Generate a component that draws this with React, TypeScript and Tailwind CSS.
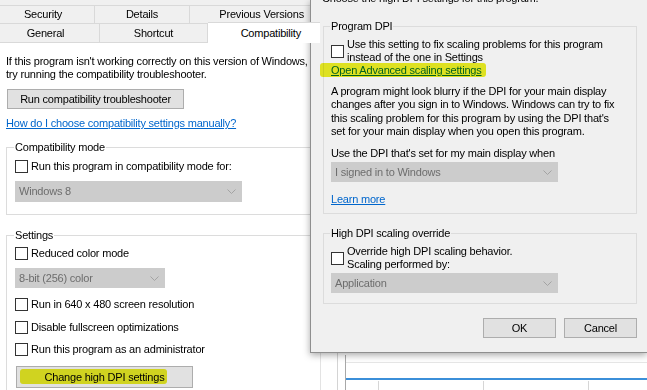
import React from 'react';

// tiny win32 style helpers
function Check() {
  return <span className="block w-[13px] h-[13px] shrink-0 border border-[#333333] bg-white" />;
}

function Chevron() {
  return (
    <svg width="9" height="5" viewBox="0 0 9 5" className="shrink-0">
      <polyline points="0.5,0.5 4.5,4.5 8.5,0.5" fill="none" stroke="#a3a3a3" strokeWidth="1" />
    </svg>
  );
}

function Select({ value, className }: { value: string; className: string }) {
  return (
    <div className={`flex items-center justify-between bg-[#cccccc] border border-[#cccccc] pl-[3px] pr-[5px] text-[#6d6d6d] ${className}`}>
      <span>{value}</span>
      <Chevron />
    </div>
  );
}

function Button({ children, className }: { children: React.ReactNode; className: string }) {
  return (
    <div className={`flex items-center justify-center bg-[#e1e1e1] border border-[#adadad] ${className}`}>
      {children}
    </div>
  );
}

function Marker({ children, className }: { children: React.ReactNode; className: string }) {
  return (
    <span className="relative inline-block">
      {children}
      <span className={`absolute bg-[#ecf024] mix-blend-multiply rounded-[3px] blur-[0.6px] ${className}`} />
    </span>
  );
}

function Row({ children, className = '' }: { children: React.ReactNode; className?: string }) {
  return (
    <div className={`flex items-center gap-[3px] ${className}`}>
      <Check />
      <div>{children}</div>
    </div>
  );
}

export default function App() {
  return (
    <div className="relative w-[647px] h-[390px] overflow-hidden bg-white text-black text-[11px] tracking-[-0.2px] leading-[13px] font-['Liberation_Sans',Arial,sans-serif]">
      {/* Properties window */}
      <div className="absolute left-0 top-0 w-[321px] h-[390px] bg-[#f0f0f0] border-r border-[#e3e3e3] flex flex-col overflow-hidden">
        <div className="h-[5px] shrink-0" />
        <div className="flex h-[19px] shrink-0">
          <div className="w-[95px] border-t border-r border-b border-[#d9d9d9] flex items-center justify-center pr-[8px]">Security</div>
          <div className="w-[95px] border-t border-r border-b border-[#d9d9d9] flex items-center justify-center">Details</div>
          <div className="flex-1 border-t border-b border-[#d9d9d9] flex items-center justify-end pr-[16px]">Previous Versions</div>
        </div>
        <div className="flex h-[19px] shrink-0">
          <div className="w-[100px] border-r border-b border-[#d9d9d9] flex items-center justify-center pr-[8px]">General</div>
          <div className="w-[108px] border-r border-b border-[#d9d9d9] flex items-center justify-center">Shortcut</div>
          <div className="relative z-10 flex-1 h-[21px] -mt-[2px] bg-white border-t border-[#d9d9d9] flex items-center justify-end pr-[19px]">Compatibility</div>
        </div>

        <div className="flex-1 bg-white pl-[6px] pt-[12px] flex flex-col items-start">
          <div>If this program isn't working correctly on this version of Windows,</div>
          <div>try running the compatibility troubleshooter.</div>
          <Button className="mt-[8px] ml-[1px] w-[177px] h-[20px]">Run compatibility troubleshooter</Button>
          <div className="mt-[8px] text-[#0066cc] underline">How do I choose compatibility settings manually?</div>

          <fieldset className="mt-[11px] w-[330px] border border-[#dcdcdc] pl-[8px] pb-[12px]">
            <legend className="px-[1px] -ml-[1px]">Compatibility mode</legend>
            <Row className="mt-[6px]">Run this program in compatibility mode for:</Row>
            <Select value="Windows 8" className="mt-[8px] w-[227px] h-[21px]" />
          </fieldset>

          <fieldset className="mt-[14px] w-[330px] border border-[#dcdcdc] pl-[8px] pb-[20px]">
            <legend className="px-[1px] -ml-[1px]">Settings</legend>
            <Row className="mt-[5px]">Reduced color mode</Row>
            <Select value="8-bit (256) color" className="mt-[8px] w-[150px] h-[20px]" />
            <Row className="mt-[10px]">Run in 640 x 480 screen resolution</Row>
            <Row className="mt-[10px]">Disable fullscreen optimizations</Row>
            <Row className="mt-[9px]">Run this program as an administrator</Row>
            <Button className="mt-[10px] ml-[1px] w-[177px] h-[22px]">
              <Marker className="-left-[25px] -right-[3px] -top-[1.5px] -bottom-[0.5px]">Change high DPI settings</Marker>
            </Button>
          </fieldset>
        </div>
      </div>

      {/* window behind, lower right */}
      <div className="absolute left-[321px] top-[352px] right-0 bottom-0 bg-white flex">
        <div className="w-[17px] border-r border-[#d4d4d4]" />
        <div className="w-[7px]" />
        <div className="flex-1 mt-[3px] border-l border-[#a8a8a8] flex flex-col">
          <div className="h-[8px] border-b border-[#e6e6e6]" />
          <div className="h-[17px] border-b-2 border-[#3b8fd9]" />
          <div className="flex-1 flex pt-[1px]">
            <div className="w-[33px] border-r border-[#d6d6d6]" />
            <div className="w-[105px] border-r border-[#d6d6d6]" />
            <div className="w-[105px] border-r border-[#d6d6d6]" />
          </div>
        </div>
      </div>

      {/* High DPI settings dialog */}
      <div className="absolute left-[310px] top-0 w-[337px] h-[353px] bg-[#f0f0f0] border-l border-b border-[#8f8f8f] shadow-[0_2px_7px_rgba(0,0,0,0.35)] pl-[11px] flex flex-col overflow-hidden">
        <div className="-mt-[8px]">Choose the high DPI settings for this program.</div>

        <fieldset className="mt-[15px] ml-[1px] w-[314px] border border-[#dcdcdc] pl-[7px] pb-[7px]">
          <legend className="px-[1px] -ml-[1px]">Program DPI</legend>
          <Row className="mt-[5px]">
            <div>Use this setting to fix scaling problems for this program</div>
            <div>instead of the one in Settings</div>
          </Row>
          <div>
            <Marker className="-left-[11px] -right-[4px] -top-[1.5px] bottom-0">
              <span className="text-[#0066cc] underline">Open Advanced scaling settings</span>
            </Marker>
          </div>
          <div className="mt-[8px] leading-[13.33px]">
            <div>A program might look blurry if the DPI for your main display</div>
            <div>changes after you sign in to Windows. Windows can try to fix</div>
            <div>this scaling problem for this program by using the DPI that's</div>
            <div>set for your main display when you open this program.</div>
          </div>
          <div className="mt-[9px]">Use the DPI that's set for my main display when</div>
          <Select value="I signed in to Windows" className="mt-[2px] w-[227px] h-[20px]" />
          <div className="mt-[11px]">
            <span className="text-[#0066cc] underline">Learn more</span>
          </div>
        </fieldset>

        <fieldset className="mt-[13px] ml-[1px] w-[314px] border border-[#dcdcdc] pl-[7px] pb-[10px]">
          <legend className="px-[1px] -ml-[1px]">High DPI scaling override</legend>
          <Row className="mt-[5px]">
            <div>Override high DPI scaling behavior.</div>
            <div>Scaling performed by:</div>
          </Row>
          <Select value="Application" className="mt-[2px] w-[227px] h-[20px]" />
        </fieldset>

        <div className="mt-[14px] pr-[10px] flex justify-end gap-[8px]">
          <Button className="w-[73px] h-[20px]">OK</Button>
          <Button className="w-[73px] h-[20px]">Cancel</Button>
        </div>
      </div>
    </div>
  );
}
